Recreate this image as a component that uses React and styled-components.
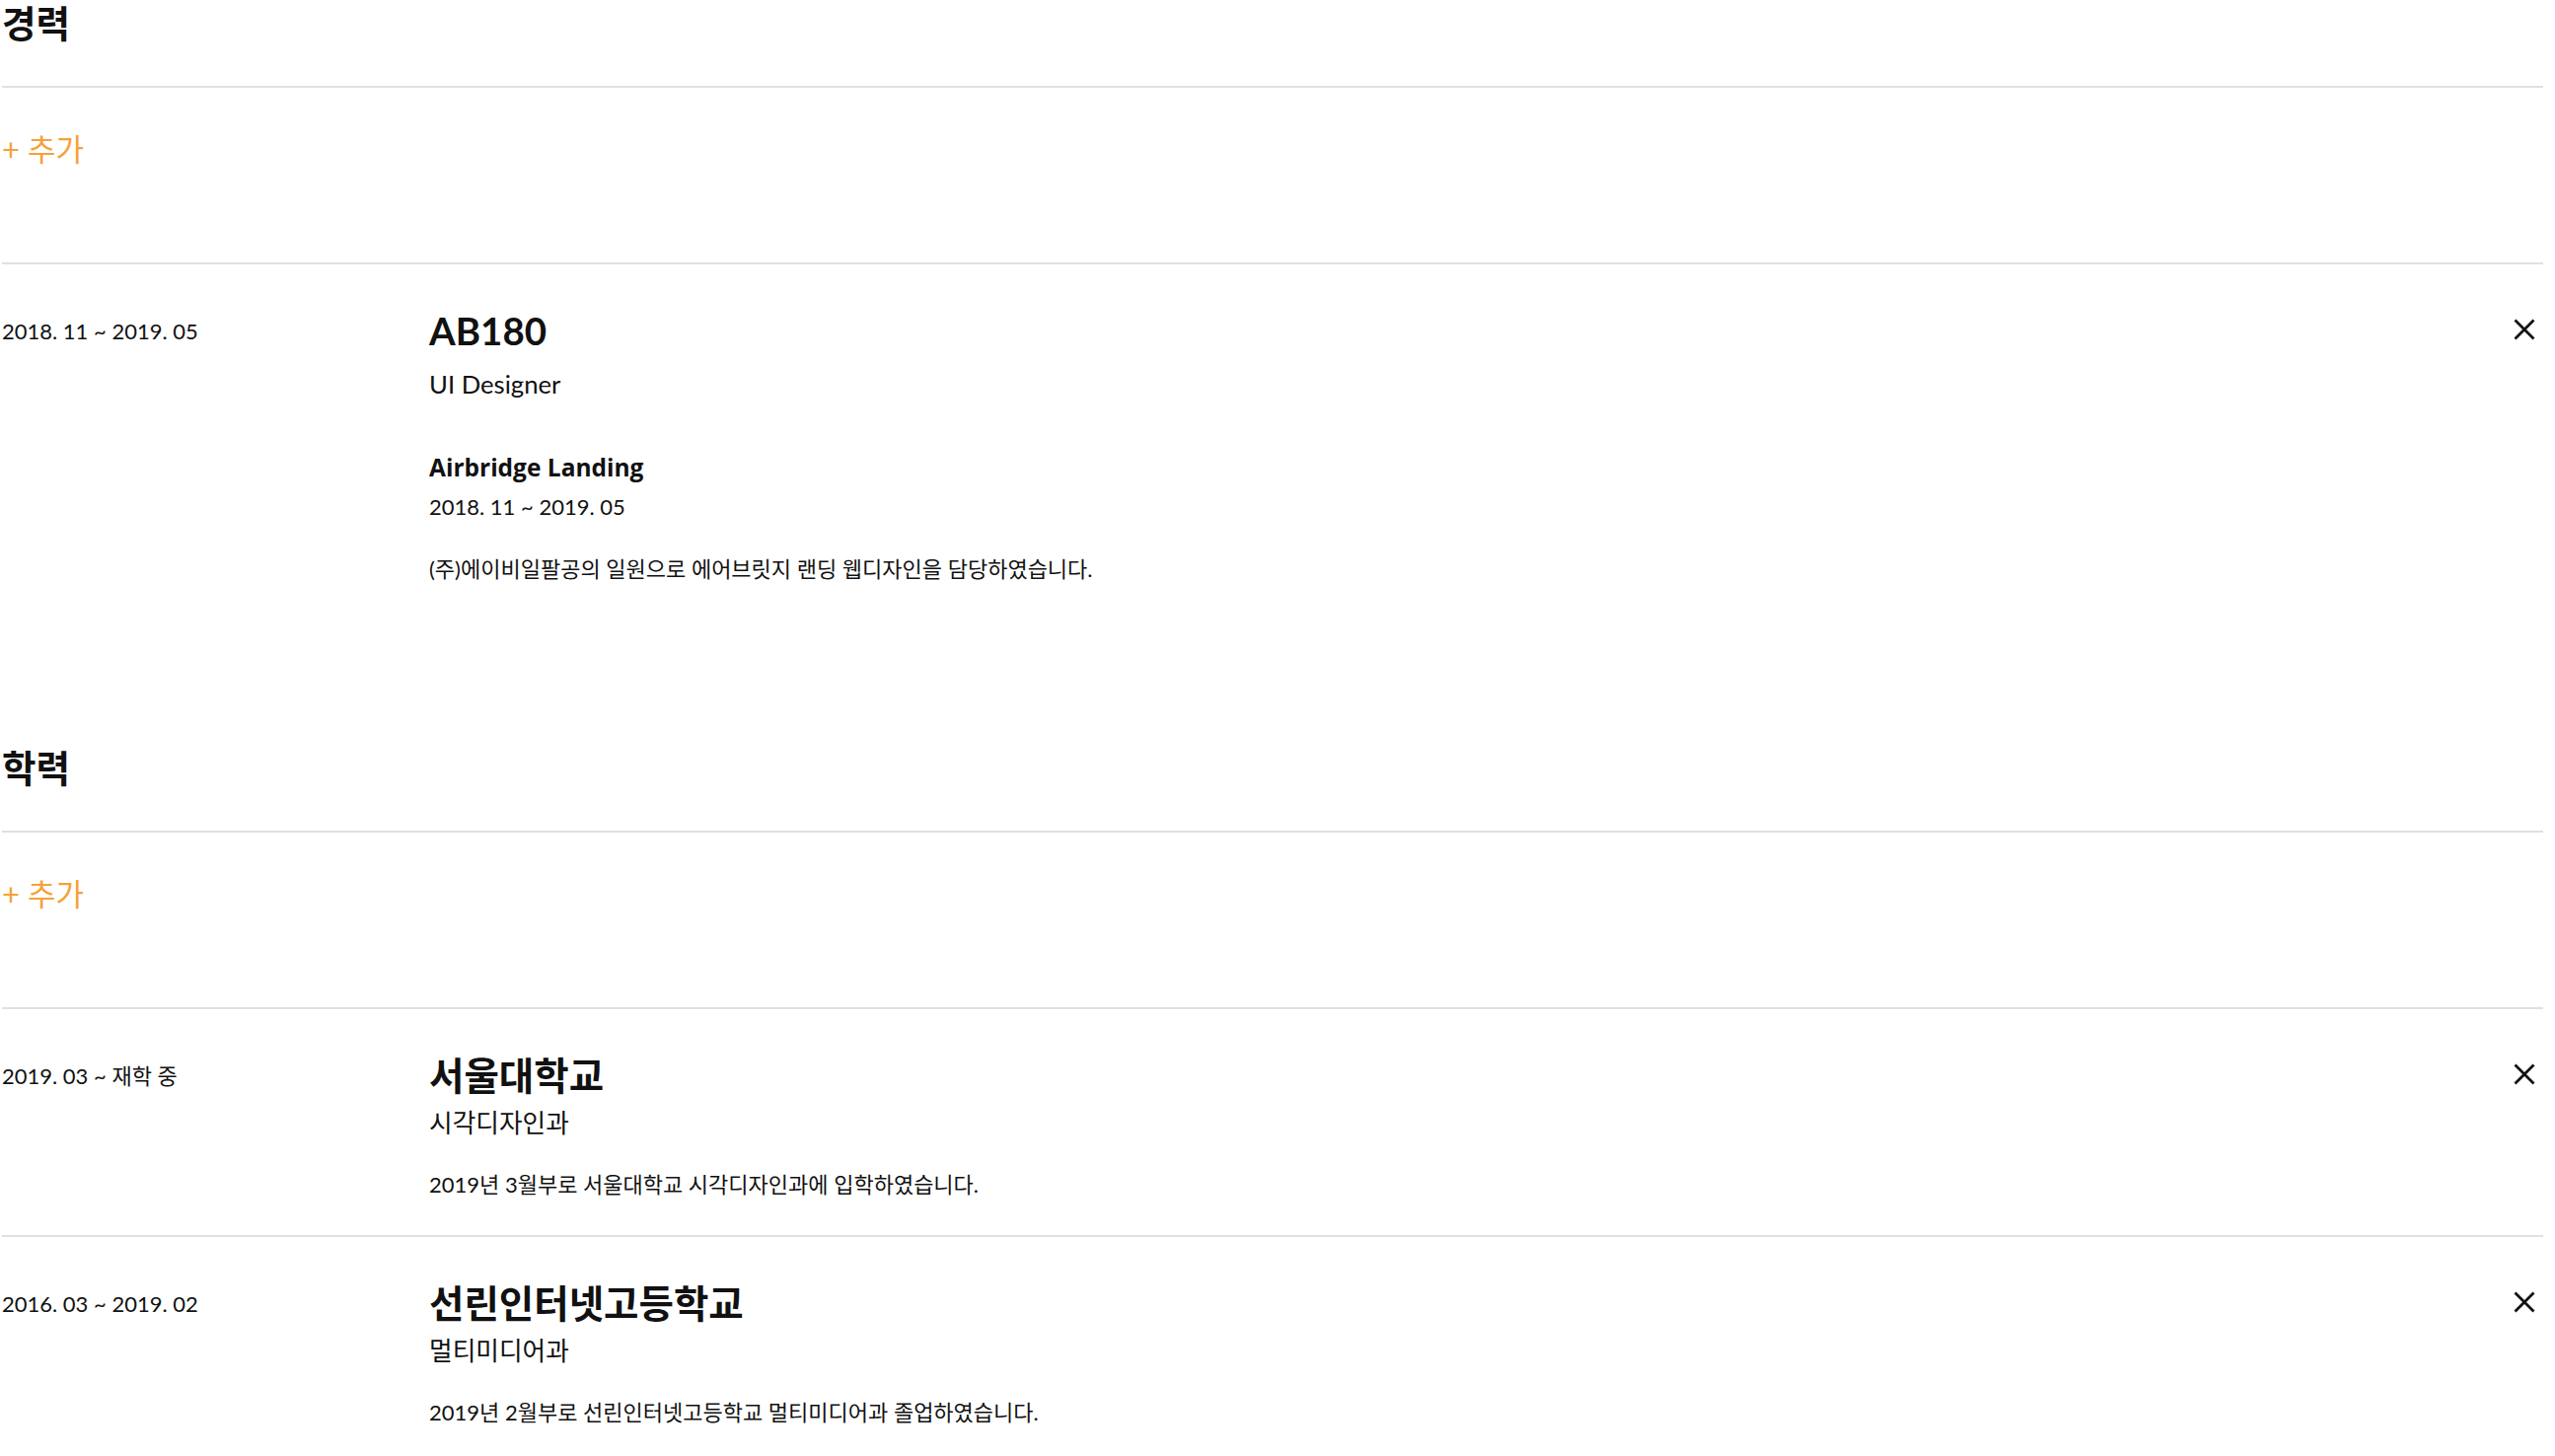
import React from 'react'
import styled, { createGlobalStyle } from 'styled-components'

const GlobalStyle = createGlobalStyle`
  html, body {
    margin: 0;
    padding: 0;
    background: #fff;
  }
  body {
    font-family: Lato, "Noto Sans CJK KR", sans-serif;
    font-size-adjust: ex-height 0.5065;
    color: #111;
  }
`

const Page = styled.div`
  margin: 0 12px 0 2px;
`

const Section = styled.section`
  margin-bottom: ${props => props.gap || 0}px;
`

const SectionHeader = styled.div`
  padding-bottom: 39px;
  border-bottom: 2px solid #e0e0e0;
`

const Heading = styled.h2`
  margin: 0;
  font-size: 38px;
  font-weight: 700;
  line-height: 48px;
`

const AddRow = styled.div`
  padding: 42px 0 95px;
  border-bottom: 2px solid #e0e0e0;
`

const AddButton = styled.button`
  border: none;
  background: none;
  padding: 0;
  font-family: inherit;
  font-size: 31px;
  line-height: 40px;
  color: #f5a13a;
  cursor: pointer;
`

const Row = styled.div`
  display: flex;
  align-items: flex-start;
  padding: 41px 0 ${props => props.bottom}px;
  border-bottom: ${props => props.last ? 'none' : '2px solid #e0e0e0'};
`

const Period = styled.div`
  width: 433px;
  flex-shrink: 0;
  padding-top: 1px;
  font-size: 22px;
  line-height: 52px;
`

const Body = styled.div`
  flex: 1;
  display: flex;
  flex-direction: column;
`

const Title = styled.div`
  font-size: 39px;
  font-weight: 700;
  line-height: 52px;
`

const Subtitle = styled.div`
  margin-top: ${props => props.gap}px;
  font-size: 25.7px;
  line-height: 36px;
`

const ProjectName = styled.div`
  margin-top: 51px;
  font-family: "Open Sans", "Noto Sans CJK KR", sans-serif;
  font-size-adjust: none;
  font-size: 24.5px;
  font-weight: 700;
  line-height: 32px;
`

const ProjectPeriod = styled.div`
  margin-top: 9px;
  font-size: 22px;
  line-height: 30px;
`

const Description = styled.p`
  margin: ${props => props.gap}px 0 0;
  font-size: 22px;
  line-height: 32px;
`

const CloseButton = styled.button`
  width: 38px;
  height: 50px;
  flex-shrink: 0;
  border: none;
  background: none;
  padding: 0;
  display: flex;
  align-items: center;
  justify-content: center;
  cursor: pointer;
  color: #111;
`

const CloseIcon = () => (
  <svg width="22" height="22" viewBox="0 0 22 22" fill="none">
    <path d="M1.5 1.5L20.5 20.5M20.5 1.5L1.5 20.5" stroke="currentColor" strokeWidth="2.8" />
  </svg>
)

const schools = [
  {
    period: '2019. 03 ~ 재학 중',
    name: '서울대학교',
    major: '시각디자인과',
    desc: '2019년 3월부로 서울대학교 시각디자인과에 입학하였습니다.',
  },
  {
    period: '2016. 03 ~ 2019. 02',
    name: '선린인터넷고등학교',
    major: '멀티미디어과',
    desc: '2019년 2월부로 선린인터넷고등학교 멀티미디어과 졸업하였습니다.',
  },
]

const App = () => {
  return (
    <Page>
      <GlobalStyle />
      <Section gap={162}>
        <SectionHeader>
          <Heading>경력</Heading>
        </SectionHeader>
        <AddRow>
          <AddButton>+ 추가</AddButton>
        </AddRow>
        <Row bottom={0} last>
          <Period>2018. 11 ~ 2019. 05</Period>
          <Body>
            <Title>AB180</Title>
            <Subtitle gap={10}>UI Designer</Subtitle>
            <ProjectName>Airbridge Landing</ProjectName>
            <ProjectPeriod>2018. 11 ~ 2019. 05</ProjectPeriod>
            <Description gap={32}>(주)에이비일팔공의 일원으로 에어브릿지 랜딩 웹디자인을 담당하였습니다.</Description>
          </Body>
          <CloseButton><CloseIcon /></CloseButton>
        </Row>
      </Section>
      <Section>
        <SectionHeader>
          <Heading>학력</Heading>
        </SectionHeader>
        <AddRow>
          <AddButton>+ 추가</AddButton>
        </AddRow>
        {schools.map((s, i) => (
          <Row key={s.name} bottom={35} last={i === schools.length - 1}>
            <Period>{s.period}</Period>
            <Body>
              <Title>{s.name}</Title>
              <Subtitle gap={4}>{s.major}</Subtitle>
              <Description gap={29}>{s.desc}</Description>
            </Body>
            <CloseButton><CloseIcon /></CloseButton>
          </Row>
        ))}
      </Section>
    </Page>
  )
}

export default App
